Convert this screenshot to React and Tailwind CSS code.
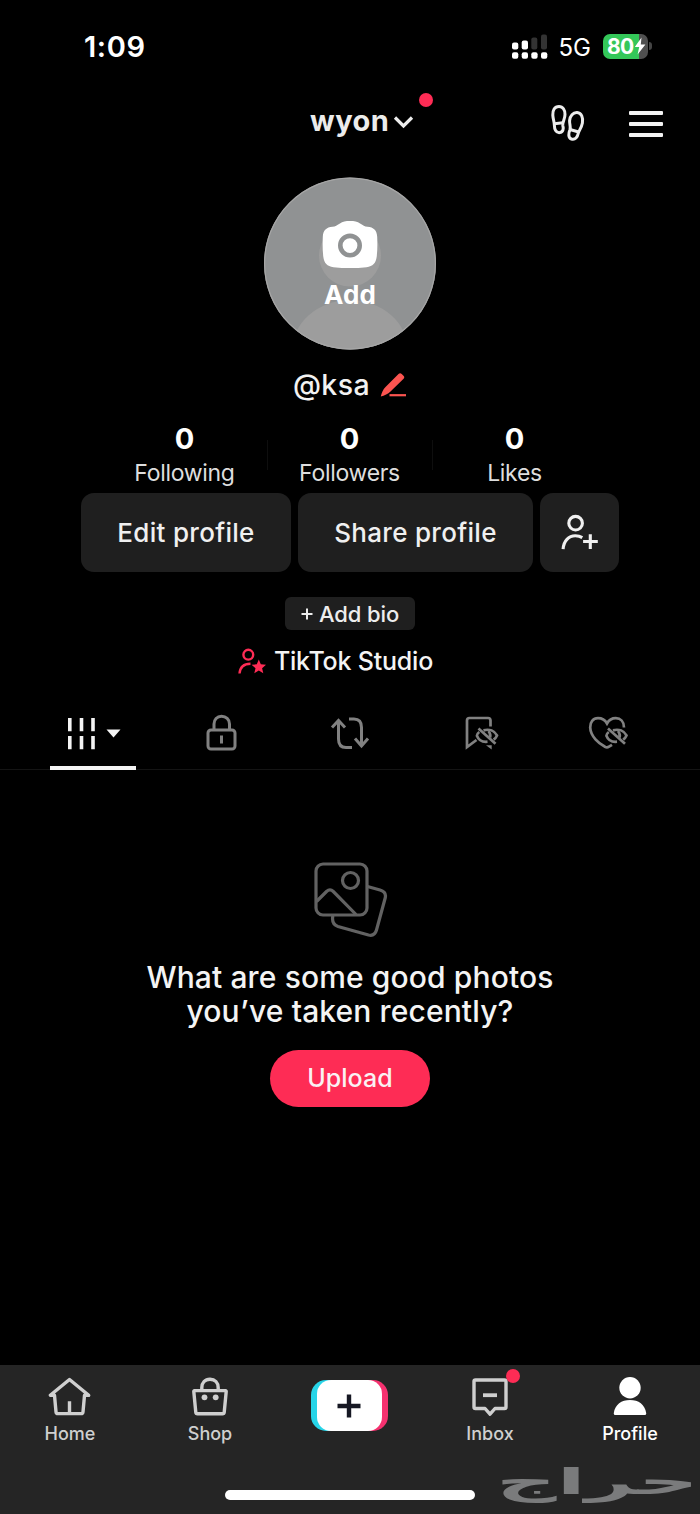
import React from "react";

function StatusBar() {
  return (
    <div className="flex h-[92px] items-center justify-between pl-[84px] pr-[48px]">
      <span className="text-[29px] leading-none font-semibold tracking-[0.6px] text-white">1:09</span>
      <div className="flex items-center">
        <svg width="36" height="25" viewBox="0 0 36 25" className="mr-[11px]">
          <g fill="#fff">
            <rect x="0" y="8.5" width="6.3" height="7" rx="2" />
            <rect x="9.7" y="6.5" width="6.3" height="9" rx="2" />
            <rect x="0" y="18.3" width="6.3" height="6.4" rx="2" />
            <rect x="9.7" y="18.3" width="6.3" height="6.4" rx="2" />
            <rect x="19.3" y="18.3" width="6.3" height="6.4" rx="2" />
            <rect x="29" y="18.3" width="6.3" height="6.4" rx="2" />
          </g>
          <g fill="#333">
            <rect x="19.3" y="3.5" width="6" height="12" rx="2" />
            <rect x="29" y="0.5" width="6" height="15" rx="2" />
          </g>
        </svg>
        <span className="mr-[12px] pt-[3px] text-[24px] leading-none text-white">5G</span>
        <div className="flex h-[25px] w-[45px] items-center overflow-hidden rounded-[7px] bg-[linear-gradient(90deg,#34c759_36px,#505050_36px)] pl-[4px]">
          <span className="text-[21px] leading-none font-bold tracking-[-0.6px] text-white">80</span>
          <svg width="12" height="20" viewBox="0 0 12 20">
            <path d="M7.5 1.5 0.8 11h4.4L3.6 18.5 11.4 8.4H6.8z" fill="#fff" />
          </svg>
        </div>
        <div className="ml-[1px] h-[8px] w-[3px] rounded-r-full bg-[#444]" />
      </div>
    </div>
  );
}

function Header() {
  return (
    <div className="grid h-[60px] grid-cols-[310px_1fr_114px] items-center">
      <span />
      <div className="relative flex items-center">
        <span className="pb-[3px] text-[29px] leading-none font-bold tracking-[0.5px] text-[#ececec]">wyon</span>
        <svg width="22" height="16" viewBox="0 0 22 16" fill="none" className="ml-[4px]">
          <path d="M2 3.5 10.5 12 19 3.5" stroke="#ececec" strokeWidth="3.2" />
        </svg>
        <span className="absolute -top-[13px] left-[109px] h-[14px] w-[14px] rounded-full bg-[#fe2c55]" />
      </div>
      <span />
    </div>
  );
}

function HeaderActions() {
  return (
    <div className="absolute top-[103px] right-[37px] flex items-center gap-[43px]">
      <svg width="36" height="40" viewBox="0 0 36 40" fill="none" stroke="#ececec" strokeWidth="3" strokeLinejoin="round">
        <path d="M9 3.4C4.5 3.4 2.5 7.5 2.8 12.2C3 16 4.4 19 4.4 22.5C4.4 26 5.8 30 9.7 29.6C13.2 29.3 13.8 25.5 12.8 22.5C12.2 19.5 15 16 15 11.5C15 7 13 3.4 9 3.4Z" />
        <path d="M4.4 20.8 12.8 19.8" />
        <path d="M27.2 9.6C23 9.3 20 13 19.6 17.5C19.3 21.5 21 23.5 20 26.5C18.6 30 17.8 34.8 21.4 36C25.3 37.2 27.5 34 28.2 30.5C28.7 27.8 31.5 25 32.4 20C33.3 14.5 31.5 10 27.2 9.6Z" />
        <path d="M20 26.5 28.7 29" />
      </svg>
      <div className="flex w-[34px] flex-col gap-[7px] pt-px">
        <span className="h-[4px] rounded-[1px] bg-[#f2f2f2]" />
        <span className="h-[4px] rounded-[1px] bg-[#f2f2f2]" />
        <span className="h-[4px] rounded-[1px] bg-[#f2f2f2]" />
      </div>
    </div>
  );
}

function Avatar() {
  return (
    <div className="relative mx-auto mt-[25px] h-[173px] w-[172px]">
      <svg width="172" height="173" viewBox="0.5 0 172 173">
        <defs>
          <clipPath id="disc">
            <circle cx="86.5" cy="86.5" r="86" />
          </clipPath>
        </defs>
        <circle cx="86.5" cy="86.5" r="86" fill="#909293" />
        <g clipPath="url(#disc)" fill="#9d9d9d">
          <circle cx="86.5" cy="78.5" r="31" />
          <ellipse cx="86.5" cy="174" rx="58" ry="51" />
        </g>
        <circle cx="86.5" cy="86.5" r="85.4" fill="none" stroke="#a6a6a6" strokeWidth="1.2" />
        <path transform="translate(0 0.8)" d="M76 46C79.5 43.8 82 43.3 86.5 43.3C91 43.3 93.500 43.8 97 46C99.500 47.600 101 48.800 104 49C110 49.400 113.400 52.500 113.700 59C114 66 114 72 113.200 79C112.300 85.500 109.500 88.500 103 89.400C92 90.600 81 90.600 70 89.400C63.500 88.500 60.700 85.500 59.800 79C59 72 59 66 59.300 59C59.600 52.500 63 49.400 69 49C72 48.800 73.500 47.600 76 46Z" fill="#fff" />
        <circle cx="86.5" cy="68.600" r="9.700" fill="none" stroke="#909293" strokeWidth="4.600" />
      </svg>
      <span className="absolute inset-x-0 top-[104px] text-center text-[26px] leading-[28px] font-bold tracking-[0.2px] text-white">Add</span>
    </div>
  );
}

function Stat({ label }) {
  return (
    <div className="flex w-[165px] flex-col items-center">
      <span className="text-[29px] leading-[36px] font-bold text-white">0</span>
      <span className="text-[23px] leading-[32px] tracking-[-0.3px] text-[#dedede]">{label}</span>
    </div>
  );
}

function Profile() {
  return (
    <div className="flex flex-col items-center">
      <div className="mt-[14px] flex h-[42px] items-center gap-[10px]">
        <span className="text-[28.5px] leading-none font-medium tracking-[0.4px] text-[#f2f2f2]">@ksa</span>
        <svg width="27" height="26" viewBox="0 0 27 26">
          <path d="M0.8 24.500C1.500 21 3 17.500 5.500 15L18.500 2C19.500 1 20.700 1 21.700 1.900L23.500 3.700C24.500 4.700 24.500 5.700 23.600 6.700L10.500 19.500C8 22 4.500 23.600 0.800 24.500Z" fill="#fb5450" />
          <path d="M9.500 23.200H26" stroke="#fb5450" strokeWidth="2.200" />
        </svg>
      </div>
      <div className="mt-[15px] mr-px flex items-center">
        <Stat label="Following" />
        <span className="-mx-[0.5px] h-[30px] w-px bg-[#0e0e0e]" />
        <Stat label="Followers" />
        <span className="-mx-[0.5px] h-[30px] w-px bg-[#0e0e0e]" />
        <Stat label="Likes" />
      </div>
      <div className="mt-[4px] flex h-[79px] gap-[7px] text-[26px] font-medium tracking-[0.3px] text-[#f0f0f0]">
        <button className="w-[210px] rounded-[13px] bg-[#1f1f1f]">Edit profile</button>
        <button className="w-[235px] rounded-[13px] bg-[#1f1f1f]">Share profile</button>
        <button className="flex w-[79px] items-center justify-center rounded-[13px] bg-[#1f1f1f]">
          <svg width="38" height="38" viewBox="0.7 0.8 38 38" fill="none" stroke="#f0f0f0" strokeWidth="3.1">
            <circle cx="15.300" cy="10" r="6.800" />
            <path d="M2.800 36C3.300 27.500 8.500 22.600 15 22.600C18 22.600 20 23.200 22 24.400" />
            <path d="M22.800 28.300H37.500M30 21V35.700" />
          </svg>
        </button>
      </div>
      <button className="mt-[25px] flex h-[33px] w-[130px] items-center justify-center gap-[6px] rounded-[6px] bg-[#1f1f1f] pt-px text-[22px] font-medium tracking-[-0.1px] text-[#ededed]">
        <svg width="12" height="12" viewBox="0 0 12 12" stroke="#ededed" strokeWidth="2">
          <path d="M0.500 6H11.500M6 0.500V11.500" />
        </svg>
        Add bio
      </button>
      <div className="mt-[13px] mr-[29px] flex h-[36px] items-center gap-[8px]">
        <svg width="28" height="27" viewBox="0 0 28 27" fill="none" stroke="#fe2c55" strokeWidth="2.400">
          <circle cx="10.300" cy="6.700" r="4.900" />
          <path d="M1.500 25.500C2 19.500 5.500 15.800 12.500 15.700" />
          <path d="M20.800 11.500 22.800 16.300 28 16.800 24.100 20.200 25.300 25.300 20.800 22.600 16.300 25.300 17.500 20.200 13.600 16.800 18.800 16.300Z" fill="#fe2c55" stroke="none" />
        </svg>
        <span className="text-[25px] leading-none font-medium tracking-[-0.2px] text-[#f4f4f4]">TikTok Studio</span>
      </div>
    </div>
  );
}

function HiddenEye() {
  return (
    <g>
      <path d="M14.500 13.500 31.500 28.700" />
      <path d="M15.300 17C13.600 18.200 12.900 19.600 12.900 20.700C14.500 24.800 18.500 27.200 23.500 26.700" />
      <path d="M19.500 15.400C25.500 13.600 30.600 16 33 20.500C32.300 22.200 31.300 23.400 29.700 24.600" />
      <path d="M24.500 16C26.500 18.500 26.700 20.500 26 22.500" />
    </g>
  );
}

function Tabs() {
  return (
    <div className="flex h-[91px] border-b border-[#141414] px-[28px]">
      <div className="flex w-[129px] flex-col items-center">
        <div className="flex flex-1 items-center gap-[10px] pt-[21px] pl-[3px]">
          <svg width="28" height="33" viewBox="0 0 28 33" stroke="#f4f4f4" strokeWidth="3.600">
            <path d="M1.800 1V14.300M13.500 1V14.300M25 1V14.300M1.800 19V32.300M13.500 19V32.300M25 19V32.300" />
          </svg>
          <svg width="15" height="9" viewBox="0 0 15 9">
            <path d="M0.500 0.500H14.500L7.500 8.500Z" fill="#f4f4f4" />
          </svg>
        </div>
        <span className="-mb-px h-[4px] w-[86px] bg-[#f4f4f4]" />
      </div>
      <div className="flex w-[128px] items-center justify-center pt-[17px]">
        <svg width="31" height="37" viewBox="0 0 31 37" fill="none" stroke="#818181" strokeWidth="3">
          <rect x="2" y="16" width="27" height="19" rx="3" />
          <path d="M8 16V10C8 5.500 11 2.300 15.500 2.300S23.500 5.500 23.500 10V16M15.500 21.500V29.500" />
        </svg>
      </div>
      <div className="flex w-[129px] items-center justify-center pt-[17px]">
        <svg width="40" height="36" viewBox="0 0 40 36" fill="none" stroke="#818181" strokeWidth="3">
          <path d="M2 12.500 8.500 5.500 15 12.500M8.500 6V24C8.500 30 11 32.500 16 32.500H22" />
          <path d="M19 4H24C29 4 31.500 6.500 31.500 12.500V30.500M25 23.500 31.500 31 38 23.500" />
        </svg>
      </div>
      <div className="flex w-[128px] items-center justify-center pt-[17px] pl-[7px]">
        <svg width="36" height="36" viewBox="0 0 36 36" fill="none" stroke="#818181" strokeWidth="2.700">
          <path d="M26.500 11.500V5.500C26.500 3.500 25.800 3 24 3H5.500C3.500 3 3 3.800 3 5.500V32L12.500 25" />
          <path d="M22 30.300H27.700V34.500Z" fill="#818181" stroke="none" />
          <HiddenEye />
        </svg>
      </div>
      <div className="flex w-[128px] items-center justify-center pt-[17px] pl-[3px]">
        <svg width="40" height="36" viewBox="0 0 40 36" fill="none" stroke="#818181" strokeWidth="2.700">
          <path d="M36 12.500C36 6.500 32.500 3.200 27.800 3.200C24 3.200 21 5 19 8.500C17 5 14 3.200 10 3.200C5 3.200 2 7 2.200 12.500C2.500 21.500 11 28.500 17 31.800C18.500 32.700 19.500 32.700 21 31.700L24 29.800" />
          <g transform="translate(5.500 0)">
            <HiddenEye />
          </g>
        </svg>
      </div>
    </div>
  );
}

function EmptyState() {
  return (
    <div className="flex flex-1 flex-col items-center pt-[92px]">
      <svg width="74" height="76" viewBox="0 0 74 76" fill="none" stroke="#626262" strokeWidth="3.200" className="ml-px">
        <rect x="2" y="2" width="51" height="51" rx="7" />
        <circle cx="36.500" cy="18.500" r="8" />
        <path d="M2.500 39.500 12.500 29.500C15 27.200 17 27.200 19.300 29.500L42 52.500" />
        <path d="M53.500 24.500 66 28C70.500 29.300 72.200 32 71.200 36L62.500 68C61.200 72.500 58.500 74 54.500 73L24 64.500C19.500 63 18 60 18.700 55V53.500" />
      </svg>
      <div className="mt-[22px] text-center text-[30px] leading-[34px] font-medium tracking-[0.13px] whitespace-nowrap text-[#f4f4f4]">
        What are some good photos
        <br />
        you’ve taken recently?
      </div>
      <button className="mt-[22px] h-[57px] w-[160px] rounded-full bg-[#fe2c55] text-[25px] font-medium text-[#faf1f3]">Upload</button>
    </div>
  );
}

function NavItem({ label, active, children }) {
  return (
    <div className="flex w-[140px] flex-col items-center pt-[9px]">
      <div className="flex h-[46px] items-center justify-center">{children}</div>
      <span className={active ? "pt-px text-[18px] leading-[26px] font-medium text-white" : "pt-px text-[18px] leading-[26px] font-medium text-[#cfcfcf]"}>{label}</span>
    </div>
  );
}

function BottomNav() {
  return (
    <div className="relative h-[149px] bg-[#252525]">
      <div className="flex">
        <NavItem label="Home">
          <svg width="44" height="40" viewBox="0.5 0.7 44 40" fill="none" stroke="#cfcfcf" strokeWidth="3.400" strokeLinejoin="round">
            <path d="M7 19H2.800L22 3.200 41.200 19H37L35.500 35.500C35.400 36.700 34.700 37.300 33.500 37.300H10.500C9.300 37.300 8.600 36.700 8.500 35.500ZM22 25V37" />
          </svg>
        </NavItem>
        <NavItem label="Shop">
          <svg width="38" height="40" viewBox="0 0.7 38 40" fill="none" stroke="#cfcfcf" strokeWidth="3.400" strokeLinejoin="round">
            <path d="M3.500 14.300H34.500C35 14.300 35.300 14.700 35.200 15.300L33.200 36C33.100 37 32.500 37.500 31.500 37.500H6.500C5.500 37.500 4.900 37 4.800 36L2.800 15.300C2.700 14.700 3 14.300 3.500 14.300ZM10.800 14V11.500C10.800 6.500 14 3 19 3S27.200 6.500 27.200 11.500V14" />
            <circle cx="13.500" cy="21" r="2.900" fill="#cfcfcf" stroke="none" />
            <circle cx="24.700" cy="21" r="2.900" fill="#cfcfcf" stroke="none" />
          </svg>
        </NavItem>
        <div className="flex w-[140px] justify-center pt-[15px] pr-[2px]">
          <div className="flex h-[51px] w-[77px] items-center justify-center rounded-[15px] bg-[linear-gradient(90deg,#27d5e8_50%,#f5316f_50%)]">
            <div className="flex h-[51px] w-[65px] items-center justify-center rounded-[14px] bg-white">
              <svg width="24" height="24" viewBox="0 0 24 24" stroke="#161823" strokeWidth="4.400">
                <path d="M0.500 12H23.500M12 0.500V23.500" />
              </svg>
            </div>
          </div>
        </div>
        <NavItem label="Inbox">
          <div className="relative">
            <svg width="38" height="40" viewBox="0 1 38 40" fill="none" stroke="#cfcfcf" strokeWidth="3.400" strokeLinejoin="round">
              <path d="M4.500 4H33.500C34.500 4 35 4.500 35 5.500V31C35 32 34.500 32.500 33.500 32.500H24L19 38.200 14 32.500H4.500C3.500 32.500 3 32 3 31V5.500C3 4.500 3.500 4 4.500 4Z" />
              <path d="M12 19.200H26" strokeWidth="3.800" />
            </svg>
            <span className="absolute -top-[8px] left-[35px] h-[14px] w-[14px] rounded-full bg-[#fe2c55]" />
          </div>
        </NavItem>
        <NavItem label="Profile" active>
          <svg width="34" height="40" viewBox="0 1 34 40" fill="#fff">
            <circle cx="17" cy="11.800" r="10.700" />
            <path d="M0.800 37C2 28.500 8.500 24 17 24S32 28.500 33.200 37C33.400 38.400 32.700 39 31.500 39H2.500C1.300 39 .6 38.400.8 37Z" />
          </svg>
        </NavItem>
      </div>
      <div className="absolute top-[125px] left-[225px] h-[10px] w-[250px] rounded-full bg-white" />
      <div dir="rtl" className="absolute top-[95px] right-[1px] origin-right scale-x-[2.34] font-['DejaVu_Sans',sans-serif] text-[36px] leading-[44px] font-bold whitespace-nowrap text-[#7a7b7c]">
        حراج
      </div>
    </div>
  );
}

export default function App() {
  return (
    <div className="relative flex h-[1514px] w-[700px] flex-col overflow-hidden bg-black font-['Inter',sans-serif]">
      <StatusBar />
      <Header />
      <HeaderActions />
      <Avatar />
      <Profile />
      <Tabs />
      <EmptyState />
      <BottomNav />
    </div>
  );
}
